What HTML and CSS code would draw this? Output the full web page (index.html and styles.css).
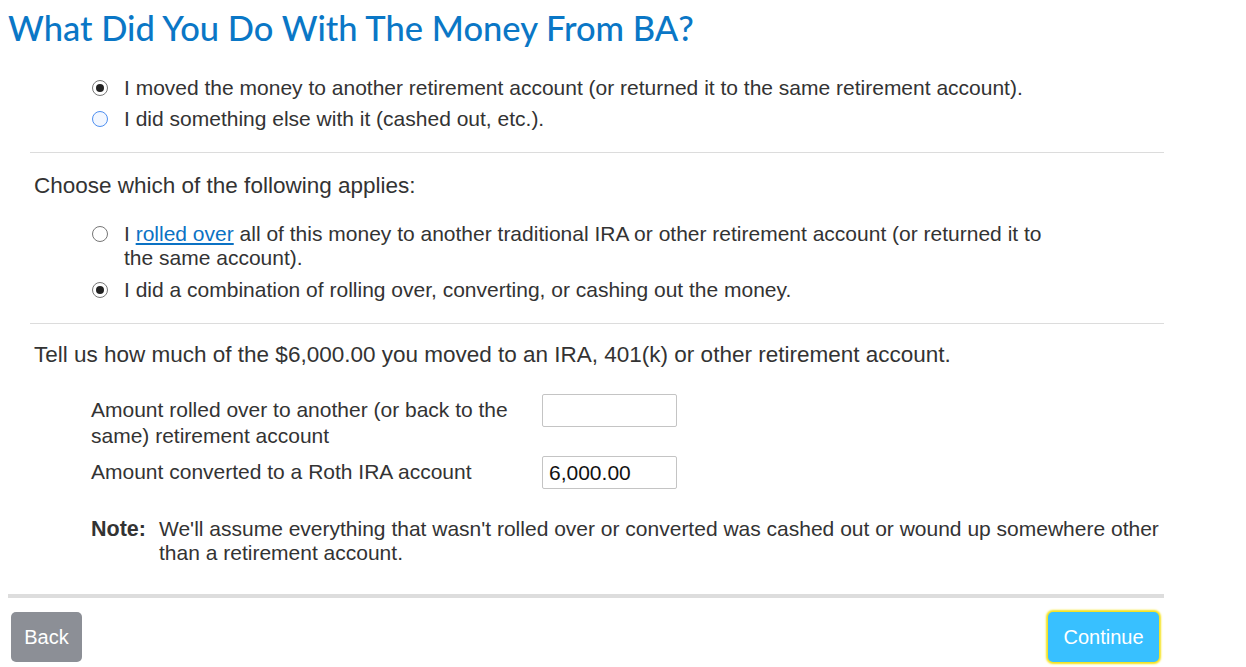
FILE: index.html
```html
<!DOCTYPE html>
<html>
<head>
<meta charset="utf-8">
<link rel="stylesheet" href="styles.css">
</head>
<body>
<div class="page">
  <h1 class="title">What Did You Do With The Money From BA?</h1>

  <div class="options first">
    <label class="option"><span class="radio checked"></span><span class="opt-text">I moved the money to another retirement account (or returned it to the same retirement account).</span></label>
    <label class="option"><span class="radio focus"></span><span class="opt-text">I did something else with it (cashed out, etc.).</span></label>
  </div>

  <div class="divider"></div>

  <p class="question q-choose">Choose which of the following applies:</p>

  <div class="options second">
    <label class="option"><span class="radio"></span><span class="opt-text">I <a class="link" href="#">rolled over</a> all of this money to another traditional IRA or other retirement account (or returned it to the same account).</span></label>
    <label class="option"><span class="radio checked"></span><span class="opt-text">I did a combination of rolling over, converting, or cashing out the money.</span></label>
  </div>

  <div class="divider"></div>

  <p class="question q-tell">Tell us how much of the $6,000.00 you moved to an IRA, 401(k) or other retirement account.</p>

  <div class="fields">
    <div class="field">
      <span class="field-label">Amount rolled over to another (or back to the same) retirement account</span>
      <input class="field-input" type="text" value="">
    </div>
    <div class="field">
      <span class="field-label">Amount converted to a Roth IRA account</span>
      <input class="field-input" type="text" value="6,000.00">
    </div>
  </div>

  <div class="note">
    <span class="note-label">Note:</span>
    <span class="note-text">We'll assume everything that wasn't rolled over or converted was cashed out or wound up somewhere other than a retirement account.</span>
  </div>

  <div class="thick-divider"></div>

  <div class="actions">
    <button class="btn btn-back">Back</button>
    <button class="btn btn-continue">Continue</button>
  </div>
</div>
<div class="bottom-line"></div>
</body>
</html>
```

FILE: styles.css
```css
html, body {
  margin: 0;
  padding: 0;
  background: #ffffff;
}

body {
  font-family: "Liberation Sans", Arial, sans-serif;
  color: #333333;
}

.page {
  width: 1156px;
  padding-left: 8px;
  height: 664px;
  box-sizing: content-box;
}

.title {
  margin: 8px 0 0 0;
  font-family: "Lato", "Liberation Sans", sans-serif;
  font-weight: 500;
  font-size: 34.5px;
  line-height: 40px;
  color: #0a77c6;
  letter-spacing: 0;
}

.options {
  display: flex;
  flex-direction: column;
  margin-left: 84px;
}

.options.first {
  margin-top: 24px;
}

.options.second {
  margin-top: 24px;
  gap: 8px;
  width: 960px;
}

.option {
  display: flex;
  align-items: flex-start;
  gap: 16px;
  font-size: 21px;
  line-height: 24px;
}

.options.first .option {
  line-height: 31px;
}

.radio {
  flex: none;
  width: 16px;
  height: 16px;
  box-sizing: border-box;
  border: 1px solid #767676;
  border-radius: 50%;
  background: #ffffff;
  margin-top: 4px;
  display: flex;
  align-items: center;
  justify-content: center;
}

.options.first .radio {
  margin-top: 8px;
}

.radio.checked::after {
  content: "";
  width: 8px;
  height: 8px;
  border-radius: 50%;
  background: #222222;
}

.radio.focus {
  border-color: #4e8ff0;
  background: #f2f7ff;
}

.opt-text {
  flex: 1;
}

.link {
  color: #0b72c4;
  text-decoration: underline;
}

.divider {
  margin-left: 22px;
  height: 1px;
  background: #dcdcdc;
}

.options.first + .divider {
  margin-top: 18px;
}

.options.second + .divider {
  margin-top: 21px;
}

.question {
  margin: 0 0 0 26px;
  font-size: 22.5px;
  line-height: 24px;
}

.q-choose {
  margin-top: 21px;
}

.q-tell {
  margin-top: 19px;
}

.fields {
  margin-top: 27px;
  margin-left: 83px;
  display: flex;
  flex-direction: column;
  gap: 7px;
}

.field {
  display: flex;
  align-items: flex-start;
}

.field-label {
  width: 451px;
  padding-right: 20px;
  box-sizing: border-box;
  padding-top: 3px;
  font-size: 21px;
  line-height: 26px;
}

.field-input {
  width: 135px;
  height: 33px;
  box-sizing: border-box;
  border: 1px solid #c4c4c4;
  border-radius: 2px;
  padding: 0 6px;
  font-family: "Liberation Sans", Arial, sans-serif;
  font-size: 21px;
  color: #111111;
  background: #ffffff;
  outline: none;
}

.note {
  margin-top: 28px;
  margin-left: 83px;
  display: flex;
  font-size: 21px;
  line-height: 24px;
}

.note-label {
  font-weight: bold;
  flex: none;
  width: 68px;
  font-size: 21.5px;
}

.note-text {
  flex: 1;
}

.thick-divider {
  margin-top: 29px;
  height: 4px;
  background: #dddddd;
}

.actions {
  margin-top: 14px;
  display: flex;
  justify-content: space-between;
  padding: 0 5px 0 3px;
}

.btn {
  height: 50px;
  border: none;
  border-radius: 5px;
  color: #ffffff;
  font-family: "Liberation Sans", Arial, sans-serif;
  font-size: 20px;
  cursor: pointer;
}

.btn-back {
  width: 71px;
  background: #8c8f96;
}

.btn-continue {
  width: 111px;
  background: #38c0ff;
  box-shadow: 0 0 2px 2px #f5e21a;
}

.bottom-line {
  height: 2px;
  width: 100%;
  background: #a9a9a9;
}
```
